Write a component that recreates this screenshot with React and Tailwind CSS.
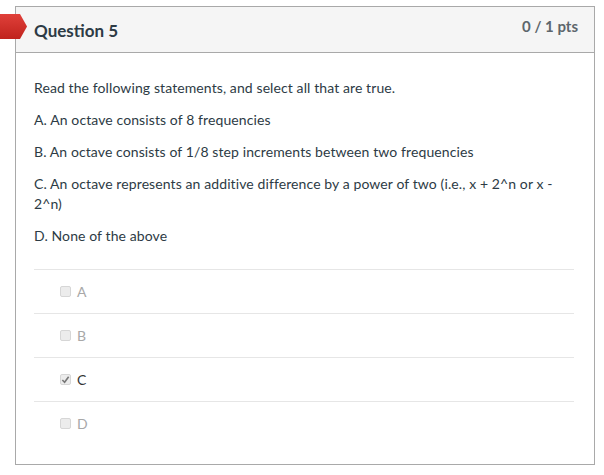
import React from 'react';

const answers = [
  { id: 'A', checked: false },
  { id: 'B', checked: false },
  { id: 'C', checked: true },
  { id: 'D', checked: false },
];

const Box = ({ checked }) => (
  <span className="w-[11px] h-[11px] border border-[#d6d6d6] bg-[#ececec] rounded-[2px] flex items-center justify-center">
    {checked && (
      <svg width="9" height="9" viewBox="0 0 10 10">
        <path d="M1.5 5.5 L4 8 L8.5 2" fill="none" stroke="#777" strokeWidth="1.8" />
      </svg>
    )}
  </span>
);

export default function App() {
  return (
    <div className="relative w-[604px] h-[475px] bg-white pt-[6px] pl-[15px] font-['Lato','Liberation_Sans',sans-serif] text-[#2d3b45]">
      {/* red flag marker */}
      <svg className="absolute left-0 top-[14px]" width="28" height="25" viewBox="0 0 28 25">
        <defs>
          <linearGradient id="flag" x1="0" y1="0" x2="0" y2="1">
            <stop offset="0" stopColor="#e0403a" />
            <stop offset="1" stopColor="#c0231d" />
          </linearGradient>
        </defs>
        <path d="M0 0 H20 L27 12.5 L20 25 H0 Z" fill="url(#flag)" />
      </svg>

      <div className="w-[580px] h-[459px] border border-[#a9a9a9]">
        <div className="h-[46px] bg-[#f5f5f5] border-b border-[#a9a9a9] flex justify-between pl-[18px] pr-[16px]">
          <h2 className="text-[17px] font-bold leading-none pt-[15px] text-[#2d3b45]">Question 5</h2>
          <div className="text-[15px] font-bold leading-none pt-[12px] text-[#5d666c]">
            0 / 1 <span>pts</span>
          </div>
        </div>

        <div className="px-[18px] pt-[25px] text-[14px] leading-[20px] tracking-[0.1px]">
          <p className="mb-[12px]">Read the following statements, and select all that are true.</p>
          <p className="mb-[12px]">A. An octave consists of 8 frequencies</p>
          <p className="mb-[12px]">B. An octave consists of 1/8 step increments between two frequencies</p>
          <p className="mb-[12px] pr-[20px]">C. An octave represents an additive difference by a power of two (i.e., x + 2^n or x - 2^n)</p>
          <p>D. None of the above</p>

          <div className="mt-[23px] mr-[2px]">
            {answers.map((a) => (
              <div key={a.id} className="h-[44px] border-t border-[#e6e6e6] flex items-center pl-[26px] gap-[6px]">
                <Box checked={a.checked} />
                <span className={`text-[14px] ${a.checked ? 'text-[#333]' : 'text-[#a8a8a8]'}`}>{a.id}</span>
              </div>
            ))}
          </div>
        </div>
      </div>
    </div>
  );
}
